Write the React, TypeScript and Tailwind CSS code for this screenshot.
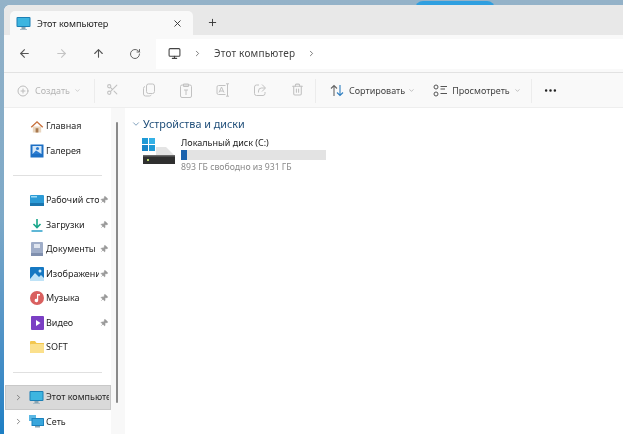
import { ArrowLeft, ArrowRight, ArrowUp, ChevronDown, ChevronRight, CirclePlus, MoreHorizontal, Pin, Plus, RotateCw, Scissors, Trash2, X, Monitor } from "lucide-react";
import type { ReactNode } from "react";

function HomeIcon() {
  return (
    <svg width="14" height="13" viewBox="0 0 15 14">
      <path d="M3 7h9v6.500H3z" fill="#e9d6c0" />
      <path d="M6 9h3v4.500H6z" fill="#a8794f" />
      <path d="M7.500 1 .8 7.400l1 .9L7.500 3l5.700 5.300 1-.9z" fill="#c8703c" />
    </svg>
  );
}

function GalleryIcon() {
  return (
    <svg width="14" height="14" viewBox="0 0 14 14">
      <rect x="0.500" y="0.500" width="13" height="13" fill="#1c6fc4" />
      <rect x="2.500" y="2" width="9" height="8" fill="#d5e8f8" />
      <circle cx="7.500" cy="4.500" r="1.500" fill="#2a7bd0" />
      <path d="M2.500 10 6 6.500 11.500 10z" fill="#2a7bd0" />
    </svg>
  );
}

function DesktopIcon() {
  return (
    <svg width="14" height="11" viewBox="0 0 14 11">
      <rect width="14" height="11" rx="1" fill="#2c9bd6" />
      <rect y="8" width="14" height="3" fill="#1a75ae" />
      <rect x="1" y="1" width="6" height="1.500" fill="#9fdcf5" />
    </svg>
  );
}

function DownloadIcon() {
  return (
    <svg width="14" height="14" viewBox="0 0 14 14" fill="none" stroke="#17a589" strokeWidth="1.600">
      <path d="M7 1v8M3.500 6 7 9.500 10.500 6" />
      <path d="M1.500 13h11" stroke="#2a9fc9" />
    </svg>
  );
}

function DocsIcon() {
  return (
    <svg width="12" height="14" viewBox="0 0 12 14">
      <rect width="12" height="14" rx="1" fill="#9fadc8" />
      <rect x="3" y="2" width="6" height="4" fill="#dfe5ef" />
      <rect x="0" y="11" width="12" height="3" fill="#7f8fae" />
    </svg>
  );
}

function PicturesIcon() {
  return (
    <svg width="14" height="14" viewBox="0 0 14 14">
      <rect width="14" height="14" rx="1" fill="#1678c2" />
      <path d="M0 12 5 6l4 4 2-2 3 3v3H0z" fill="#bfe3f7" />
      <circle cx="10" cy="4" r="1.500" fill="#cfeaf9" />
    </svg>
  );
}

function MusicIcon() {
  return (
    <svg width="14" height="14" viewBox="0 0 14 14">
      <circle cx="7" cy="7" r="7" fill="#d9605f" />
      <path d="M7 3h3v1.600H8.200V9.500A1.800 1.800 0 1 1 7 7.800z" fill="#fff" />
    </svg>
  );
}

function VideoIcon() {
  return (
    <svg width="13" height="14" viewBox="0 0 13 14">
      <rect width="13" height="14" rx="1" fill="#7b3fc4" />
      <path d="M5 4v6l4.500-3z" fill="#fff" />
    </svg>
  );
}

function FolderIcon() {
  return (
    <svg width="14" height="12" viewBox="0 0 14 12">
      <path d="M0 1a1 1 0 0 1 1-1h4l1.500 2H14v9a1 1 0 0 1-1 1H1a1 1 0 0 1-1-1z" fill="#f3c74f" />
      <rect y="3" width="14" height="9" rx="1" fill="#fbe08c" />
    </svg>
  );
}

function NetworkIcon() {
  return (
    <svg width="15" height="13" viewBox="0 0 15 13">
      <rect x="0" y="0" width="7" height="6" fill="#5cb8e4" />
      <rect x="2.500" y="3" width="12.500" height="8" rx="0.500" fill="#1c82bd" />
      <rect x="3.500" y="4" width="10.500" height="6" fill="#39a6dc" />
      <rect x="6" y="11" width="5" height="1.500" fill="#8aa4b2" />
    </svg>
  );
}

function PcIcon() {
  return (
    <svg width="15" height="15" viewBox="0 0 15 15">
      <rect x="0.500" y="1" width="14" height="10" rx="1" fill="#1c7fb5" />
      <rect x="1.500" y="2" width="12" height="8" fill="#3db5e0" />
      <rect x="5.500" y="11" width="4" height="2" fill="#8aa4b2" />
      <rect x="4" y="13" width="7" height="1" fill="#a9bcc7" />
    </svg>
  );
}

function CopyIcon() {
  return (
    <svg width="14" height="14" viewBox="0 0 14 14" fill="none" stroke="currentColor">
      <rect x="4.500" y="1" width="8" height="9.500" rx="2" />
      <path d="M3 3.500A2 2 0 0 0 1.500 5.500v5.500a2 2 0 0 0 2 2h4a2 2 0 0 0 1.800-1.200" />
    </svg>
  );
}

function PasteIcon() {
  return (
    <svg width="14" height="15" viewBox="0 0 14 15" fill="none" stroke="currentColor">
      <rect x="1.500" y="2" width="11" height="12.500" rx="1.500" />
      <path d="M4.500 1h5v2.500h-5zM5 7h4M7 7v5" />
    </svg>
  );
}

function RenameIcon() {
  return (
    <svg width="15" height="14" viewBox="0 0 15 14" fill="none" stroke="currentColor">
      <path d="M9.500 2.500h-7a1.500 1.500 0 0 0-1.500 1.500v6a1.500 1.500 0 0 0 1.500 1.500h7" />
      <path d="M3 9.500 5.500 4 8 9.500M4 8h3M11.500 1v12M10 .8h3M10 13.200h3" />
    </svg>
  );
}

function ShareIcon() {
  return (
    <svg width="14" height="14" viewBox="0 0 14 14" fill="none" stroke="currentColor">
      <path d="M6 2H3.500A2 2 0 0 0 1.500 4v6.500a2 2 0 0 0 2 2H10a2 2 0 0 0 2-2V9" />
      <path d="M9 1.500 12.500 5 9 8.500M12 5H8.500A3 3 0 0 0 5.500 8v1.500" />
    </svg>
  );
}

function SortIcon() {
  return (
    <svg width="14" height="13" viewBox="0 0 14 13" fill="none" strokeWidth="1.100">
      <path d="M4 12V1.500M1 4.500 4 1.500l3 3" stroke="#666" />
      <path d="M10 1v10.500M7 8.500l3 3 3-3" stroke="#2f7fc1" />
    </svg>
  );
}

function ViewIcon() {
  return (
    <svg width="15" height="13" viewBox="0 0 15 13" fill="none" stroke="#555">
      <circle cx="3" cy="3" r="2" />
      <circle cx="3" cy="10" r="2" />
      <path d="M7.500 2.500H14M7.500 5H12M7.500 9.500H14" />
    </svg>
  );
}

function NavRow({ icon, label, pin }: { icon: ReactNode; label: string; pin?: boolean }) {
  return (
    <div className="flex h-[24.500px] items-center pl-[25px]">
      <span className="flex w-[16px] shrink-0 justify-center">{icon}</span>
      <span className="ml-[1px] w-[53px] overflow-hidden whitespace-nowrap text-[9px] leading-[14px] text-[#1f1f1f]">{label}</span>
      {pin && <Pin size={8} className="ml-[1px] rotate-45 fill-[#999] text-[#999]" />}
    </div>
  );
}

function ToolBtn({ children }: { children: ReactNode }) {
  return <span className="flex w-[37px] justify-center text-[#c2c2c2]">{children}</span>;
}

export default function App() {
  return (
    <div className="relative h-[434px] w-[623px] overflow-hidden bg-gradient-to-b from-[#94b2c8] via-[#7da9c8] to-[#1c7fc4] pl-[4px] pt-[5px] font-['Noto_Sans',sans-serif] blur-[0.3px]">
      {/* wallpaper peeking above the window */}
      <div className="absolute left-[415px] top-[1px] h-[8px] w-[80px] rounded-t-full bg-[#2f9fe0]" />
      <div className="relative flex h-[429px] w-[619px] flex-col overflow-hidden rounded-tl-[6px] bg-white">
        {/* Tab strip */}
        <div className="flex h-[30px] items-end bg-[#e8e8e8] pl-[6px]">
          <div className="flex h-[24px] w-[183px] items-center rounded-t-[5px] bg-[#f9f9f9] pl-[6px] pr-[10px] pt-[1px]">
            <PcIcon />
            <span className="ml-[6px] text-[9.100px] text-[#222]">Этот компьютер</span>
            <X size={11} className="ml-auto text-[#333]" />
          </div>
          <Plus size={11} className="mb-[7px] ml-[14px] text-[#333]" />
        </div>

        {/* Address row */}
        <div className="flex h-[38px] items-center border-b border-[#e2e2e2] bg-[#f9f9f9]">
          <ArrowLeft size={13} className="ml-[14px] text-[#555]" />
          <ArrowRight size={13} className="ml-[24px] text-[#c4c4c4]" />
          <ArrowUp size={13} className="ml-[24px] text-[#555]" />
          <RotateCw size={12} className="ml-[24px] text-[#666]" />
          <div className="ml-[15px] flex h-[30px] flex-1 items-center bg-white pl-[12px]">
            <Monitor size={13} className="text-[#444]" />
            <ChevronRight size={9} className="ml-[12px] text-[#555]" />
            <span className="ml-[12px] text-[10px] tracking-[0.2px] text-[#444]">Этот компьютер</span>
            <ChevronRight size={9} className="ml-[12px] text-[#555]" />
          </div>
        </div>

        {/* Command bar */}
        <div className="flex h-[35px] items-center border-b border-[#eee] bg-[#f9f9f9] pl-[13px] pt-[1px]">
          <CirclePlus size={12} className="text-[#bcbcbc]" />
          <span className="ml-[6px] text-[9px] text-[#b5b5b5]">Создать</span>
          <ChevronDown size={7} className="ml-[4px] text-[#b5b5b5]" />
          <span className="ml-[13px] h-[24px] w-px bg-[#ececec]" />
          <span className="ml-[-1px] flex">
            <ToolBtn><Scissors size={13} /></ToolBtn>
            <ToolBtn><CopyIcon /></ToolBtn>
            <ToolBtn><PasteIcon /></ToolBtn>
            <ToolBtn><RenameIcon /></ToolBtn>
            <ToolBtn><ShareIcon /></ToolBtn>
            <ToolBtn><Trash2 size={13} /></ToolBtn>
          </span>
          <span className="ml-[-1px] h-[24px] w-px bg-[#ececec]" />
          <span className="ml-[14px]"><SortIcon /></span>
          <span className="ml-[5px] text-[9px] text-[#444]">Сортировать</span>
          <ChevronDown size={7} className="ml-[3px] text-[#999]" />
          <span className="ml-[18px]"><ViewIcon /></span>
          <span className="ml-[4px] text-[9px] text-[#444]">Просмотреть</span>
          <ChevronDown size={7} className="ml-[4px] text-[#999]" />
          <span className="ml-[10px] h-[24px] w-px bg-[#ececec]" />
          <MoreHorizontal size={15} className="ml-[11px] text-[#222]" />
        </div>

        <div className="flex min-h-0 flex-1">
          {/* Sidebar */}
          <div className="w-[107px] shrink-0 bg-white pt-[6px]">
            <NavRow icon={<HomeIcon />} label="Главная" />
            <NavRow icon={<GalleryIcon />} label="Галерея" />
            <div className="mx-[9px] mb-[12px] mt-[12px] h-px bg-[#e0e0e0]" />
            <NavRow icon={<DesktopIcon />} label="Рабочий стол" pin />
            <NavRow icon={<DownloadIcon />} label="Загрузки" pin />
            <NavRow icon={<DocsIcon />} label="Документы" pin />
            <NavRow icon={<PicturesIcon />} label="Изображения" pin />
            <NavRow icon={<MusicIcon />} label="Музыка" pin />
            <NavRow icon={<VideoIcon />} label="Видео" pin />
            <NavRow icon={<FolderIcon />} label="SOFT" />
            <div className="mx-[9px] mb-[12px] mt-[12px] h-px bg-[#e0e0e0]" />
            <div className="ml-[1px] flex h-[25px] items-center border border-[#c8c8c8] bg-[#d9d9d9] pl-[8px]">
              <ChevronRight size={9} className="text-[#666]" />
              <span className="ml-[5px] flex w-[16px] shrink-0 justify-center"><PcIcon /></span>
              <span className="ml-[2px] w-[63px] overflow-hidden whitespace-nowrap text-[9px] leading-[14px] text-[#1f1f1f]">Этот компьютер</span>
            </div>
            <div className="ml-[1px] flex h-[24px] items-center pl-[9px]">
              <ChevronRight size={9} className="text-[#666]" />
              <span className="ml-[5px] flex w-[16px] shrink-0 justify-center"><NetworkIcon /></span>
              <span className="ml-[2px] text-[9px] leading-[14px] text-[#1f1f1f]">Сеть</span>
            </div>
          </div>

          {/* Scrollbar gutter */}
          <div className="w-[14px] shrink-0 bg-[#f8f8f8] pl-[5px] pt-[14px]">
            <div className="h-[281px] w-[2px] rounded-full bg-[#8a8a8a]" />
          </div>

          {/* Content */}
          <div className="flex-1 pl-[6px] pt-[9px]">
            <div className="flex items-center">
              <ChevronDown size={10} className="text-[#6a8fb0]" />
              <span className="ml-[2px] text-[10.800px] leading-[14px] text-[#1f4e79]">Устройства и диски</span>
            </div>
            <div className="mt-[7px] flex pl-[11px]">
              <svg width="34" height="28" viewBox="0 0 34 28">
                <rect x="0" y="0" width="6" height="6" fill="#1f9ad6" />
                <rect x="7" y="0" width="6" height="6" fill="#35b1e6" />
                <rect x="0" y="7" width="6" height="6" fill="#1886c8" />
                <rect x="7" y="7" width="6" height="6" fill="#1f9ad6" />
                <path d="M14 9h10l8 8H14z" fill="#e4e4e4" />
                <rect x="1" y="17" width="32" height="9" fill="#2f2f2f" />
                <rect x="1" y="17" width="32" height="1.500" fill="#6a6a6a" />
                <rect x="5" y="21" width="2" height="2" fill="#b9d66a" />
              </svg>
              <div className="ml-[5px]">
                <div className="mt-[-1px] text-[9px] leading-[12px] text-[#222]">Локальный диск (C:)</div>
                <div className="mt-[1px] h-[10px] w-[145px] bg-[#e3e3e3]">
                  <div className="h-full w-[6px] bg-[#1a62ad]" />
                </div>
                <div className="mt-[1px] text-[8.700px] leading-[12px] text-[#8a8a8a]">893 ГБ свободно из 931 ГБ</div>
              </div>
            </div>
          </div>
        </div>
      </div>
    </div>
  );
}
